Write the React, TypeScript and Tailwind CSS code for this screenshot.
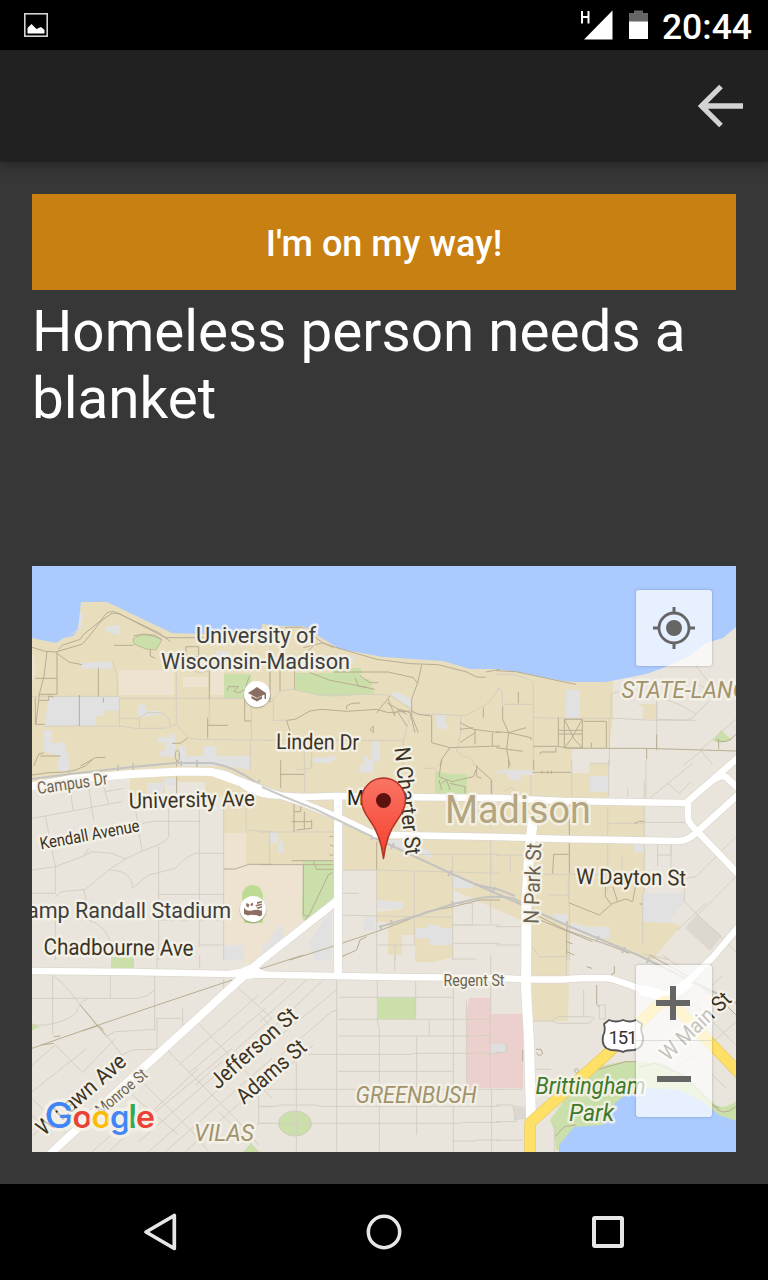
import React from "react";

const INK = "#3b3324";
const OLIVE = "#6b6350";
const STREET = "#d5cfc1";
const TRAIL = "#b8ad93";

type LabelProps = {
  x: number;
  y: number;
  len: number;
  size: number;
  angle?: number;
  fill?: string;
  italic?: boolean;
  halo?: number;
  children: string;
};

function Label({ x, y, len, size, angle = 0, fill = INK, italic = false, halo = 5, children }: LabelProps) {
  return (
    <text
      x={x}
      y={y}
      fontSize={size}
      fill={fill}
      textLength={len}
      lengthAdjust="spacingAndGlyphs"
      fontStyle={italic ? "italic" : "normal"}
      transform={`rotate(${angle} ${x} ${y})`}
      stroke="#f6f3ea"
      strokeOpacity={0.85}
      strokeWidth={halo}
      strokeLinejoin="round"
      paintOrder="stroke"
    >
      {children}
    </text>
  );
}

/* One sheet of map detail, drawn in units of a third of a pixel. */
function Sheet({
  x,
  y,
  streets = "",
  trails = "",
  blocks = "",
}: {
  x: number;
  y: number;
  streets?: string;
  trails?: string;
  blocks?: string;
}) {
  return (
    <g transform={`translate(${x} ${y}) scale(0.33333)`} fill="none" strokeWidth="3">
      <path d={blocks} fill="#e1e1e1" />
      <path d={streets} stroke={STREET} />
      <path d={trails} stroke={TRAIL} />
    </g>
  );
}

const UPPER_ROAD =
  "M28 787L72 779L132 774L182 771.500L212 772Q228 773 240 782Q252 793 270 795L303 797L337 796L393 797L500 798L563 801L686 803";
const LOWER_ROAD =
  "M228 776L270 792L303 803L340 818L365 830Q372 835 390 835L500 837L563 839L678 841Q687 841 696 833L740 793";
const NORTH_EAST =
  "M686 803L740 756M688 802V818Q688 823 699 833L740 876M707 785Q719 774 726 777L740 790";
const VERTICAL = "M338 796V975";
const PARK_ST = "M533 818L529 857L526.500 900L526 988L529 1040L531 1118";
const REGENT =
  "M28 971L132 972L232 974L337 976L393 977L500 978L529 979.500L563 979.500Q600 977 612 979L630 985L656 996L676 993L713 957L740 925";
const MONROE = "M338 900L300 930L262 960L248 972L165 1048L132 1078L50 1154";
const US151 = "M530 1158V1123L606 1055L653 1010Q663 999 671 1002L740 1074";

function MapDrawing() {
  return (
    <svg
      viewBox="32 566 704 586"
      width="704"
      height="586"
      className="block"
      fontFamily="Roboto, 'Liberation Sans', sans-serif"
    >
      <defs>
        <linearGradient id="pin" x1="0" y1="0" x2="0" y2="1">
          <stop offset="0" stopColor="#fb7466" />
          <stop offset="1" stopColor="#f4402a" />
        </linearGradient>
      </defs>
      <rect x="32" y="566" width="704" height="586" fill="#e9e5dc" />

      {/* campus */}
      <path
        fill="#e8ddbd"
        d="M32 560H613V719L609 748H572V773H589V763H608V800H644L645 843L643 921L660 923L666 920L681 926L656 955L650 962L570 925L568 1021H532V925L453 890V957L434 962H415V935H402V955H388V922H376V870H343V800H338V865L246 864L224 833V797H205V782H165V793L130 796V774L32 786Z"
      />
      <path fill="#e8ddbd" d="M637 704H656V719H643V707Z" />
      <path fill="#e9e5dc" d="M376 900L403 902V909L376 912Z" />
      {/* sports grounds */}
      <path
        fill="#eee3d1"
        d="M224 833H246V864H303L302 920L255 970L224 945ZM119 670H174V695H119ZM183 677H208V687H183ZM211 670H224V695H211ZM32 653Q36 655 35 675L32 682Z"
      />
      {/* green areas */}
      <g fill="#cbdfaa">
        <path d="M133 639L142 634L155 635L162 640L156 650L146 649L134 644Z" stroke="#b8b48f" strokeWidth="0.800" />
        <path d="M224 674H251V698H224ZM296 673H332V668H361V679H370L374 693Q335 699 315 695L296 690Z" />
        <path d="M303 861H334V897L305 922L302 918ZM435 771L450 774H467V794H435Z" />
        <path d="M378 997H416V1019H378ZM111 957H134V968H111Z" />
        <ellipse cx="295" cy="1123.500" rx="16.500" ry="12.500" stroke="#d3cdbf" />
        <path d="M713 741L721 730L732 740L719 743ZM243 1152L251 1143L259 1152ZM32 1023L40 1027L32 1030Z" />
        <path d="M590 1155L556 1150L554 1130L550 1120L575 1085L600 1066L626 1061L663 1063L690 1080L716 1105Q725 1110 736 1101V1152Z" />
      </g>
      <path fill="#bddb94" d="M242 895Q244 885 252 885Q261 885 263 895V923H244Z" />
      {/* hospital blocks */}
      <path fill="#ebd0cd" d="M469 998H491V1014H523V1088H467L466 1020Z" />
      <path fill="#e0dfdf" d="M491 1044H505V1053H491Z" />
      {/* lakes */}
      <path
        fill="#abcbff"
        d="M32 566H736V627L723 638L706 643L689 656L663 668L646 674L606 682L576 682L563 681L516 672L496 669L470 669L443 661L383 657L340 649L315 634L303 626H278L262 624V634L205 634L172 633L107 602H81L78 630L73 636L64 638L56 643L32 638ZM559 1152V1145L574 1127L603 1125L616 1102L629 1093L646 1088L679 1090L703 1102L719 1115L736 1121V1152Z"
      />
      <path fill="#dcd7cf" d="M685 928L697 914L722 936L710 951ZM514 1105L530 1108V1119L514 1120Z" />

      {/* minor streets, trails and buildings */}
      <Sheet
        x={32}
        y={566}
        blocks="M50 392H262V434H215V450H192V480H38ZM145 135L155 150L145 190L75 228L100 215L138 190ZM222 182L264 176V210L222 195ZM150 290L225 288L240 284V308H150ZM318 418L340 414V435H390V445L340 452H318ZM35 492H60V530H100V560H110V600H80V570L35 555ZM376 514H415V505H430V572H385V555H400V530H376ZM440 540H462V570H515V540H553V570H655V600H440ZM552 256H595V276H552Z"
        streets="M0 391H260L265 397H720M38 480H260L310 487H400L433 475L470 515L500 520L720 523M262 395V485M240 284Q257 310 257 390M433 315V475M262 457H320L345 440H385Q415 450 415 480M322 457V485M655 520V600M532 400V480M658 400V520M480 315Q510 325 535 312"
        trails="M0 244L40 256L70 258L150 235Q165 220 207 165L240 142H260L400 215H550M80 250L90 238L145 220L155 205L205 165L225 140L245 136L380 200L415 226M246 238H304M70 258L110 288L150 296M45 258L36 330L22 385L12 475M75 260V385H20M10 337H75M20 403H50V390L65 393M10 395V475H38M142 387V480M199 305V392M214 395V410M5 600L20 565L35 560M25 570H86M145 600L190 575L220 574M420 532H445L468 515M430 560Q437 545 442 560V580L437 590L430 575ZM355 250V270L370 277M462 242H500V272H462ZM532 315V400M527 455V517M527 478H587M638 400V465H658M304 210Q345 198 389 220M585 375L590 362H620L605 375L620 380L640 370L650 335L655 330"
      />
      <Sheet
        x={260}
        y={566}
        blocks="M155 270L285 272L270 305L155 300ZM388 385L410 377L455 400V428ZM528 448H555V475L570 488H530ZM335 527H360V586H335ZM310 570H325V600H310ZM160 575H200L210 569L234 576L205 590H160Z"
        streets="M30 410L60 375L100 370L180 388H260L290 385L390 387L455 430L430 525V600M0 523H430M40 400V463H80M455 440L480 445H545L615 450L680 415L720 365M602 450V500L590 555L610 572Q640 570 643 600M133 525V600M155 605V550M150 185H30V370"
        trails="M75 184L125 183L190 232L240 248L350 280L450 293L535 296L620 318L650 333L678 334M678 318L720 310M130 245L190 230L220 245M128 270L160 240M104 290V370M30 300V410M60 300V375M150 320L210 343L325 365M300 330L330 350H355M220 318H385L460 335L473 352M485 297L473 350L455 400V450L475 500M285 335L295 360L345 370M80 463L105 460L150 435L185 430L260 436L350 430L385 440L450 435M260 430V420L275 412L300 411M350 440L390 390M385 400L405 450M380 410L440 445M400 445L420 430L450 440M415 440L440 480M450 440L465 500M455 435L475 445L515 450V530L570 545L720 540M80 465L90 495V515M330 490L340 480V500ZM600 470L640 490L720 500M600 490L640 485M600 530L645 500M645 490V535M697 500V540M570 545L545 580L540 600M670 425V455"
      />
      <Sheet
        x={496}
        y={566}
        blocks="M210 371H252V455H207V430L210 428ZM700 475L720 495V480Z"
        streets="M112 345V600M22 415H112M0 325L50 325L100 340L112 350M0 370Q10 360 17 375L20 415M112 455L230 457H360L450 462L570 463L590 455L640 405M482 400V460L600 463M340 457V600M345 455V385L360 378H380M482 380V555M510 400L560 420L600 445M600 350L640 375M615 550L720 460M560 600L615 555L650 595M630 275L600 300L640 350"
        trails="M0 314L60 317L200 347L240 355M187 455V540M205 460H259V546H205ZM187 493H259M187 504H259M205 460L235 520L259 546M259 460L225 520L205 546M262 466H331V545M112 541H180L230 547H450L720 555M482 505V550M452 547V580M286 530V545M132 565L135 558H180V545M67 378V412M20 420V460L38 500L90 485M0 497L38 500L105 515V522M38 500L32 550L42 600M0 545L80 556M660 520Q690 540 720 505M668 520V550"
      />
      <Sheet
        x={32}
        y={760}
        blocks="M78 0H110V32H78ZM498 0H653V30L600 20L498 10ZM345 70L400 67L390 100H345ZM395 55H435V75H395ZM712 215H720V255H712ZM575 555H636V600H575ZM690 555H720V600H690Z"
        streets="M0 175L40 168L270 125M115 85L123 152M170 80L185 182M215 80L230 132M310 145L330 273M40 168L70 320V400L60 400H0M0 330L70 320L150 290L180 275L240 280L280 297L230 330L160 388L90 395L70 410M410 130V230Q400 250 330 273L280 297M330 190L365 184H502M502 135V560M380 260V600M575 140V600M575 280H490Q460 290 430 325L350 345L300 385M230 330Q300 330 302 385M378 403H575M380 480H575M502 555H575M155 390L165 430M170 480Q230 500 237 560M70 480V600M642 140V210L720 215M655 0V30M220 95L275 85M155 290L170 265"
        trails="M0 45L50 38Q150 40 180 0M434 50V100M434 0V20M575 327H610L650 313H720"
      />
      <Sheet
        x={260}
        y={760}
        blocks="M300 15H320V0H340V38H300ZM30 216H55V245H70V280H55V250H30ZM350 240H450L515 280V295L460 280L395 265ZM578 345L640 370V385H578ZM350 420L430 430V445H350ZM310 470H345V510H310ZM468 505H500V495H540V505H577V555H510V535H468ZM55 497H68V550L20 590H0ZM145 550L215 450V600H165Z"
        streets="M0 216H220M29 216V310M134 0V95M153 0V25L110 30M248 330H350L720 340M350 330V600M463 335V555M578 290V600M692 290V490M465 283H720M692 235V340M246 400H296M246 465L350 468L577 472M578 495H720M578 550H720M350 555H465M405 555V600M577 495H640M577 430H637V495M692 60V105M692 120V210M490 25H525L550 55"
        trails="M62 0V85M62 43H132M102 130V215M102 155H122V130M95 185H155M133 155V210M155 180V205L110 210M220 230H208M220 258L210 255M220 285L208 285M95 302H220M0 314H220M130 315V465L145 470M160 305L170 328H220M218 338L205 345L150 460L135 480M350 245V330M90 600L200 565L350 515L430 485L500 455L580 440L660 420H720M245 590L290 570L300 540L320 530M545 0L537 50L575 65L640 50L650 25M650 15V50L665 55M650 20L695 60V105M537 60L545 90M545 70L560 60L570 90M570 70L615 80V100"
      />
      <Sheet
        x={496}
        y={760}
        blocks="M0 35L20 30H110V45H80L65 65L40 55L30 40H0ZM282 47H336V95H282ZM414 250H445V276H414ZM443 400H565V425L515 490L443 485ZM172 462H215V490L172 480ZM225 485L265 500H340V535H310L225 505Z"
        streets="M227 0V110M282 10H335M338 0V110M105 45V110M335 140V400M445 60V400M335 190H445M445 187H575M450 0V115M395 85V110M460 115L590 10M515 70L550 100L585 65M485 250V320M485 285H525V250M525 250V330M0 285H80M43 285V340M220 130V600M120 343H335M378 290V325M155 405H218M217 345V420M335 340H415M565 340V425L605 465L720 575M720 230L600 350L570 355M605 465L720 350M545 510L630 430M0 500H75M0 555H75M105 555L130 590H210M440 580L520 600M440 400V555M28 95Q45 70 62 95"
        trails="M38 0V25M110 37H224M138 32V42M155 32V42M166 32V42M113 0V30M415 190L430 184H445M220 130V340M170 340L173 283H218M218 428L310 465L350 430L390 417L410 425L420 370M328 375V410L345 432M350 380L365 425M430 432H440M120 465L210 510L350 560L400 580M120 475L290 545M212 490V600M212 545L230 552M212 575L235 585"
      />
      <Sheet
        x={32}
        y={955}
        streets="M62 60V240M235 45V128M0 130H320L345 122L368 105M368 65V225M375 190V283M372 190H450M452 160V225M503 0V40M375 0V40M575 70V105H600M65 65Q90 75 145 150L210 225L270 300M0 210H40Q110 200 135 170Q140 140 165 133M220 245L250 230L370 223M270 300L300 285L380 282M0 330L70 270M0 410L165 280M70 270L150 350M150 355L250 250M400 280L610 490L680 570M320 370L480 530L530 590M500 205L640 350L720 430M620 100L720 190M440 330L680 120M470 355L700 160M490 390L720 190M300 420L440 540M300 530L600 280M320 560L620 300M350 590L720 260M180 590L330 460M230 590L500 340M400 590L720 310M460 590L640 430M560 470L680 590M0 430L110 540L80 565M0 480L60 540M680 380V510M680 455H720M680 505H720M0 545L50 500"
        trails="M0 280L200 210L370 152L600 75M145 150L190 205L220 240M150 228L200 212L215 225M65 245L85 243M28 270L65 265"
      />
      <Sheet
        x={260}
        y={955}
        streets="M230 75V590M352 75V200L358 220V590M467 75V190M404 0V50M350 0V50M692 0V180M580 75V590M235 127H580M235 193H690M235 243H635L692 240M508 195V243M470 245V540M145 298H455L460 295H720M235 349H580M0 403H720M0 454H50L60 450H170L180 454H720M0 505H600L610 502H720M580 558H640L650 555H720M109 320V590M695 400V590M619 137V195M620 195V400M0 145L80 75M0 200L140 75M0 255L190 75M0 290L230 105M40 320L215 170L235 165M80 340L160 270M0 180L60 245M578 12H650M690 180V400"
        trails="M0 42L130 0M245 5L255 0"
      />
      <Sheet
        x={496}
        y={955}
        streets="M211 0V60M263 105V185M110 198H170L185 185H280L295 190L280 205H185L170 198M310 150H328V192H310ZM120 343H165M0 403H80M0 450H50L60 500L0 500M0 556H80M22 265H32V292H0M500 0L570 50M500 180L600 90M540 200L680 60M630 280L720 200M500 370L590 300L690 400M165 500Q175 505 175 520V590M600 150L720 270"
        trails="M272 35L288 40M355 33V55L345 58M302 90V148L310 155M120 283L135 283L140 295L130 303L120 292M235 345Q245 335 248 350Q240 360 235 345M300 345L390 320H420M430 335L480 325L560 360L650 450Q680 490 720 455M177 545L205 515L240 510M80 285V318M650 450L670 460M460 0L570 60L690 150L720 180"
      />

      {/* railway */}
      <g fill="none" stroke="#c4c3c0">
        <path
          strokeWidth="2.200"
          d="M32 779L70 774L132 767L175 763H212Q235 767 258 784L317 810L373 837L450 873L500 895L566 925L640 956L736 1003"
        />
        <path strokeWidth="2" d="M379 927L413 917L453 904L480 898Q500 895 515 899L540 914M474 884L500 890L515 896" />
        <path
          strokeWidth="2"
          d="M69 771L70 777M118 765V772M133 763V770M181 761V766M197 760V767M260 780L256 785M318 806L314 812M375 834L371 840M394 843L391 849M452 870L448 876M495 887L492 893M381 925V930M391 920L393 926M452 901L454 907M567 921V929M599 936L596 942M625 947L622 953M649 957L647 963"
        />
      </g>

      {/* main roads */}
      <g fill="none" strokeLinejoin="round">
        <g stroke="#dcd8ce">
          <path d={`${UPPER_ROAD}${LOWER_ROAD}${NORTH_EAST}${REGENT}`} strokeWidth="8" />
          <path d={`${VERTICAL}${MONROE}`} strokeWidth="9" />
          <path d={PARK_ST} strokeWidth="11" />
        </g>
        <g stroke="#fff">
          <path d={`${UPPER_ROAD}${LOWER_ROAD}${NORTH_EAST}${REGENT}`} strokeWidth="6.500" />
          <path d="M28 787L72 779L132 774L182 771.500L212 772L240 782" strokeWidth="8" />
          <path d={`${VERTICAL}${MONROE}`} strokeWidth="7.800" />
          <path d={PARK_ST} strokeWidth="9.800" />
        </g>
        <path d="M215 973L240 969L252 964L262 970L275 974L248 979Z" fill="#fff" />
        <path d="M640 990L658 994L668 997L690 982" stroke="#fff" strokeWidth="10" />
        <path d="M262 787L285 797L317 810L373 837" stroke="#cbcbc8" strokeWidth="2" />
        <path d={US151} stroke="#eacb5e" strokeWidth="11.500" />
        <path d={US151} stroke="#ffe067" strokeWidth="10" />
      </g>

      {/* labels */}
      <Label x={196} y={643} len={120} size={22.500} fill="#3e3e3e">University of</Label>
      <Label x={161} y={669} len={189} size={22.500} fill="#3e3e3e">Wisconsin-Madison</Label>
      <Label x={276} y={749} len={83} size={22} angle={0.600}>Linden Dr</Label>
      <Label x={621.5} y={698} len={126} size={23} italic fill="#a1936c">STATE-LANG</Label>
      <Label x={38} y={794} len={71} size={17} angle={-8} fill={OLIVE}>Campus Dr</Label>
      <Label x={129} y={808.5} len={126} size={22} angle={-1.200}>University Ave</Label>
      <Label x={41} y={849.5} len={101} size={17} angle={-10.500}>Kendall Avenue</Label>
      <Label x={27} y={918} len={204} size={22.500} fill="#3e3e3e">amp Randall Stadium</Label>
      <Label x={43.5} y={954.5} len={150} size={22.500} angle={0.500}>Chadbourne Ave</Label>
      <Label x={347} y={805} len={17} size={21} fill="#202020">M</Label>
      <Label x={394.5} y={748} len={108} size={22} angle={84}>N Charter St</Label>
      <Label x={445} y={822.5} len={146} size={39} fill="#b2a57f">Madison</Label>
      <Label x={538.5} y={924} len={81} size={21.500} angle={-88} fill={OLIVE}>N Park St</Label>
      <Label x={576} y={884} len={110} size={22} angle={0.800}>W Dayton St</Label>
      <Label x={443.500} y={985.500} len={61} size={17} fill={OLIVE}>Regent St</Label>
      <Label x={218} y={1090} len={109} size={22} angle={-42}>Jefferson St</Label>
      <Label x={244} y={1105} len={85} size={22} angle={-41}>Adams St</Label>
      <Label x={44} y={1136.5} len={111} size={22} angle={-41}>W Lawn Ave</Label>
      <Label x={101} y={1116} len={62} size={16} angle={-40} fill={OLIVE}>Monroe St</Label>
      <Label x={355.5} y={1103} len={121} size={23.500} italic fill="#a1936c">GREENBUSH</Label>
      <Label x={194} y={1140.5} len={60} size={24} italic fill="#a1936c">VILAS</Label>
      <Label x={535.500} y={1094} len={110} size={23.500} italic fill="#3f7a2a">Brittingham</Label>
      <Label x={569} y={1120.5} len={45} size={23.500} italic fill="#3f7a2a">Park</Label>
      <Label x={668} y={1062} len={89} size={21.500} angle={-43.500}>W Main St</Label>

      {/* highway shield */}
      <path
        d="M604 1024L609 1020Q616 1023 623 1020Q630 1023 636 1020L642 1024Q640 1030 643 1036Q644 1048 634 1050Q626 1050 623 1052Q619 1050 611 1050Q601 1048 603 1036Q606 1030 604 1024Z"
        fill="#fff"
        stroke="#555459"
        strokeWidth="1.800"
      />
      <text x="608.500" y="1043.500" fontSize="18.500" fill="#333" textLength="29">151</text>

      {/* university marker */}
      <circle cx="257" cy="695" r="13.500" fill="#000" fillOpacity="0.180" />
      <circle cx="257" cy="694" r="13" fill="#fff" />
      <g fill="#8d6e63">
        <path d="M248 693L257 687L266 693V699H264.500V694.500L257 698Z" />
        <path d="M251.500 696L257 698.500L262 696V698.500L257 701.500L251.500 698.500Z" />
      </g>
      {/* stadium marker */}
      <circle cx="253" cy="910" r="13.500" fill="#000" fillOpacity="0.180" />
      <circle cx="253" cy="909" r="13" fill="#fff" />
      <path
        fill="#8d6e63"
        d="M244 907.500Q246 911.500 252 910.500Q258 909 261.500 911L262 908V915L260 916.500Q252 913.500 248 915.500L244 914ZM246.500 903L249.500 904.500L248.500 907.500L246 906ZM250.500 904L253 902.500V905.500L251 906ZM257 902L262 901V902.500L257 904ZM255.500 905L262 903.500V905L256 906.500ZM256.500 907.500L262 906V907.500L258 909Z"
      />

      {/* destination pin */}
      <path
        d="M383.500 858.500C381.500 842 378 831 370 820.500Q361.500 809 361.500 800A22 22 0 0 1 405.500 800Q405.500 809 397 820.500C389 831 385.500 842 383.500 858.500Z"
        fill="url(#pin)"
        stroke="#b13426"
        strokeWidth="1.500"
        strokeLinejoin="round"
      />
      <circle cx="383.500" cy="800.500" r="7.500" fill="#5c120e" />

      {/* provider name */}
      <g
        fontFamily="Inter, Roboto, sans-serif"
        fontWeight="600"
        stroke="#f6f3ea"
        strokeOpacity="0.750"
        strokeWidth="7"
        strokeLinejoin="round"
        paintOrder="stroke"
      >
        <text x="44.500" y="1128" fontSize="36" fontWeight="500" fill="#4285f4" textLength="29" lengthAdjust="spacingAndGlyphs">G</text>
        <text x="72.500" y="1128" fontSize="30.500" fill="#ea4335" textLength="19.500" lengthAdjust="spacingAndGlyphs">o</text>
        <text x="91.500" y="1128" fontSize="30.500" fill="#fbbc05" textLength="19.500" lengthAdjust="spacingAndGlyphs">o</text>
        <text x="110" y="1128" fontSize="30.500" fill="#4285f4" textLength="20" lengthAdjust="spacingAndGlyphs">g</text>
        <text x="128.500" y="1128" fontSize="32" fill="#34a853">l</text>
        <text x="136" y="1128" fontSize="30.500" fill="#ea4335" textLength="19" lengthAdjust="spacingAndGlyphs">e</text>
      </g>
    </svg>
  );
}

export default function App() {
  return (
    <div className="flex h-[1280px] w-[768px] flex-col overflow-hidden bg-[#373737] font-['Roboto','Liberation_Sans',sans-serif]">
      <div className="flex h-[50px] shrink-0 items-center bg-black pr-4 pl-6">
        <svg width="24" height="24" viewBox="0 0 24 24" aria-hidden="true">
          <rect x="0.750" y="0.750" width="22.500" height="22.500" fill="none" stroke="#d4d4d4" strokeWidth="1.700" />
          <path d="M3.500 15L7.500 11L12.500 16L17 14L20.500 17V20.500H3.500Z" fill="#fff" />
        </svg>
        <svg className="ml-auto" width="33" height="30" viewBox="0 0 33 30" aria-hidden="true">
          <path d="M2 1V13.500M8.500 1V13.500M2 7H8.500" stroke="#fff" strokeWidth="2" fill="none" />
          <path d="M32.500 0.500V29.500H4Z" fill="#fff" />
        </svg>
        <svg className="ml-4" width="19" height="30" viewBox="0 0 19 30" aria-hidden="true">
          <path d="M5 0.500H14V3H19V12H0V3H5Z" fill="#666" />
          <path d="M0 11.500H19V29H0Z" fill="#fff" />
        </svg>
        <span className="ml-3.5 pt-1 text-[35.5px] leading-[46px] font-medium text-white">20:44</span>
      </div>

      <header className="flex h-[112px] shrink-0 items-center justify-end bg-[#212121] pr-[25.5px] shadow-[0_4px_12px_rgba(0,0,0,0.3)]">
        <svg width="45" height="44" viewBox="0 0 45 44" aria-label="Back">
          <path d="M23 2.500L3.500 22L23 41.500M3.500 22H45" fill="none" stroke="#d3d3d3" strokeWidth="5.300" />
        </svg>
      </header>

      <main className="flex flex-1 flex-col px-8 pt-8">
        <button className="h-24 w-full shrink-0 bg-[#c88012] pt-1 text-[36px] font-medium text-white">
          I'm on my way!
        </button>
        <h1 className="mt-2 h-[268px] shrink-0 text-[56.6px] leading-[67px] text-white">
          Homeless person needs a blanket
        </h1>
        <section className="relative h-[586px] w-[704px] shrink-0 overflow-hidden">
          <MapDrawing />
          <button
            aria-label="My location"
            className="absolute top-6 right-6 flex size-[76px] items-center justify-center rounded-[3px] bg-white/70 shadow-[0_0_3px_rgba(0,0,0,0.25)]"
          >
            <svg width="44" height="44" viewBox="0 0 44 44">
              <circle cx="22" cy="22" r="15" fill="none" stroke="#666" strokeWidth="2.800" />
              <circle cx="22" cy="22" r="8" fill="#666" />
              <path d="M22 1V8M22 36V43M1 22H8M36 22H43" stroke="#666" strokeWidth="3" />
            </svg>
          </button>
          <div className="absolute right-6 bottom-[35px] flex h-[152px] w-[76px] flex-col rounded-[3px] bg-white/70 shadow-[0_0_3px_rgba(0,0,0,0.25)]">
            <button aria-label="Zoom in" className="flex h-[76px] items-center justify-center border-b border-black/10">
              <svg width="36" height="36" viewBox="0 0 36 36">
                <path d="M17 1V35M0 18H34" stroke="#666" strokeWidth="6" />
              </svg>
            </button>
            <button aria-label="Zoom out" className="flex h-[76px] items-center justify-center">
              <svg width="36" height="36" viewBox="0 0 36 36">
                <path d="M1 18H35" stroke="#666" strokeWidth="6" />
              </svg>
            </button>
          </div>
        </section>
      </main>

      <nav className="flex h-24 shrink-0 items-center justify-around bg-black px-12">
        <svg width="40" height="40" viewBox="0 0 40 40" aria-label="Back">
          <path d="M34.300 3.500V36.500L6 20Z" fill="none" stroke="#e6e6e6" strokeWidth="3.700" strokeLinejoin="round" />
        </svg>
        <svg width="40" height="40" viewBox="0 0 40 40" aria-label="Home">
          <circle cx="20" cy="20" r="15.700" fill="none" stroke="#e6e6e6" strokeWidth="3.500" />
        </svg>
        <svg width="40" height="40" viewBox="0 0 40 40" aria-label="Recent">
          <rect x="6" y="6" width="28" height="28" rx="1" fill="none" stroke="#e6e6e6" strokeWidth="4" />
        </svg>
      </nav>
    </div>
  );
}
